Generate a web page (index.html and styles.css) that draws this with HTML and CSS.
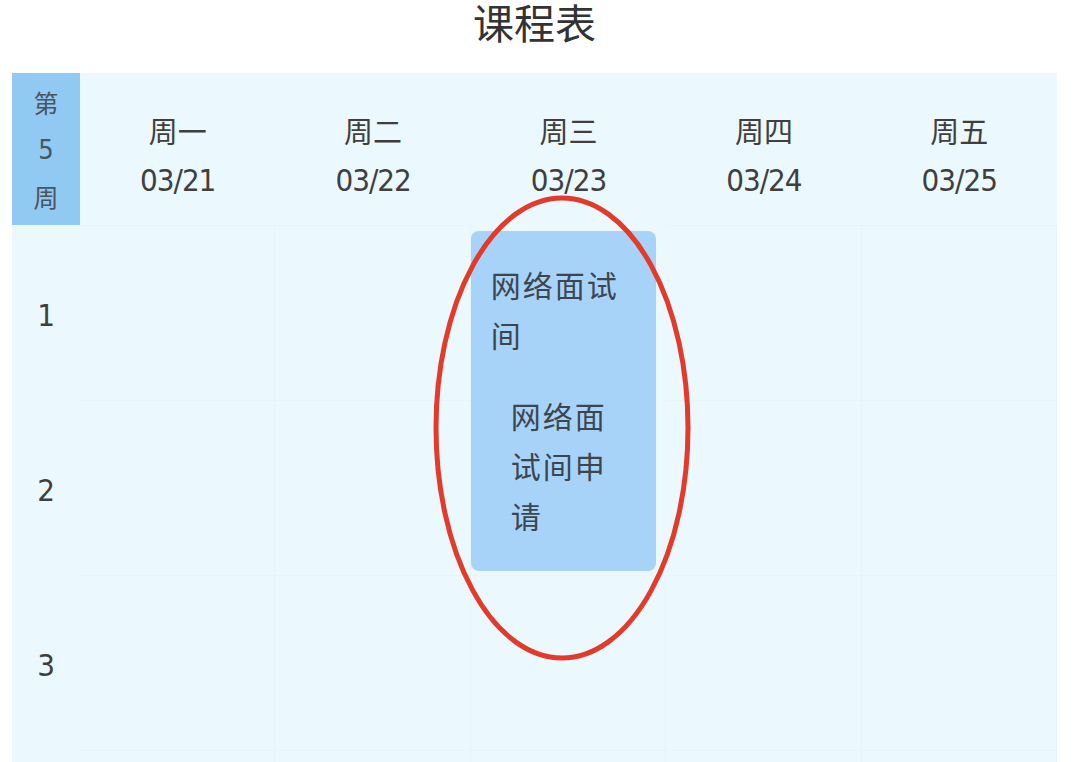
FILE: index.html
```html
<!DOCTYPE html>
<html lang="zh-CN">
<head>
<meta charset="utf-8">
<title>课程表</title>
<link rel="stylesheet" href="styles.css">
</head>
<body>
<h1 class="title">课程表</h1>
<div class="timetable">
  <div class="week-label"><span>第</span><span class="num">5</span><span>周</span></div>
  <div class="day-head"><span class="day">周一</span><span class="date">03/21</span></div>
  <div class="day-head"><span class="day">周二</span><span class="date">03/22</span></div>
  <div class="day-head"><span class="day">周三</span><span class="date">03/23</span></div>
  <div class="day-head"><span class="day">周四</span><span class="date">03/24</span></div>
  <div class="day-head"><span class="day">周五</span><span class="date">03/25</span></div>

  <div class="course">
    <div class="course-name">网络面试间</div>
    <div class="course-room">网络面试间申请</div>
  </div>

  <div class="row-label">1</div>
  <div class="cell"></div><div class="cell"></div><div class="cell"></div><div class="cell"></div>
  <div class="row-label">2</div>
  <div class="cell"></div><div class="cell"></div><div class="cell"></div><div class="cell"></div>
  <div class="row-label">3</div>
  <div class="cell"></div><div class="cell"></div><div class="cell"></div><div class="cell"></div><div class="cell"></div>
  <div class="row-label"></div>
  <div class="cell"></div><div class="cell"></div><div class="cell"></div><div class="cell"></div><div class="cell"></div>
</div>
<svg class="highlight" width="1080" height="762" viewBox="0 0 1080 762">
  <ellipse cx="562" cy="428" rx="126" ry="230" fill="none" stroke="#e23a2b" stroke-width="5"/>
</svg>
</body>
</html>
```
FILE: styles.css
```css
html, body {
  margin: 0;
  padding: 0;
  background: #ffffff;
  overflow: hidden;
  height: 762px;
}
body {
  font-family: "Noto Sans", "Noto Sans CJK SC", sans-serif;
  color: #3f3f3f;
  position: relative;
}
.title {
  margin: 0 0 23px 0;
  height: 50px;
  line-height: 42px;
  font-size: 41px;
  font-weight: 400;
  text-align: center;
  color: #333;
  padding-right: 11px;
  font-family: "Noto Sans CJK SC", sans-serif;
}
.timetable {
  margin-left: 12px;
  width: 1045px;
  background: #ebf8fd;
  display: grid;
  grid-template-columns: 68px repeat(5, 1fr);
  grid-template-rows: 152px repeat(4, 175px);
}
.week-label {
  grid-column: 1;
  background: #90caf3;
  display: flex;
  flex-direction: column;
  justify-content: center;
  align-items: center;
  font-size: 25px;
  line-height: 47px;
  color: #4a5560;
  font-family: "Noto Sans CJK SC", sans-serif;
}
.week-label .num {
  font-family: "DejaVu Sans", sans-serif;
  font-stretch: condensed;
  font-size: 27px;
}
.day-head {
  display: flex;
  flex-direction: column;
  align-items: center;
  padding-top: 32px;
  line-height: 50px;
}
.day {
  font-size: 29px;
  font-family: "Noto Sans CJK SC", sans-serif;
}
.date {
  font-family: "DejaVu Sans", sans-serif;
  font-stretch: condensed;
  font-size: 31px;
  letter-spacing: -1px;
}
.row-label {
  grid-column: 1;
  display: flex;
  justify-content: center;
  align-items: center;
  padding-top: 4px;
  font-size: 31px;
  font-family: "DejaVu Sans", sans-serif;
  font-stretch: condensed;
}
.cell {
  border-top: 1px solid #e6f5fc;
  border-right: 1px solid #e6f5fc;
}
.course {
  grid-column: 4;
  grid-row: 2 / span 2;
  margin: 6px 10px 4px 0;
  background: #a8d3f8;
  border-radius: 8px;
  padding: 28px 20px 0 20px;
  font-family: "Noto Sans CJK SC", sans-serif;
  font-size: 30px;
  line-height: 50px;
  letter-spacing: 2px;
  color: #3c4650;
}
.course-room {
  margin-top: 31px;
  padding: 0 20px;
}
.highlight {
  position: absolute;
  left: 0;
  top: 0;
  pointer-events: none;
}
```
